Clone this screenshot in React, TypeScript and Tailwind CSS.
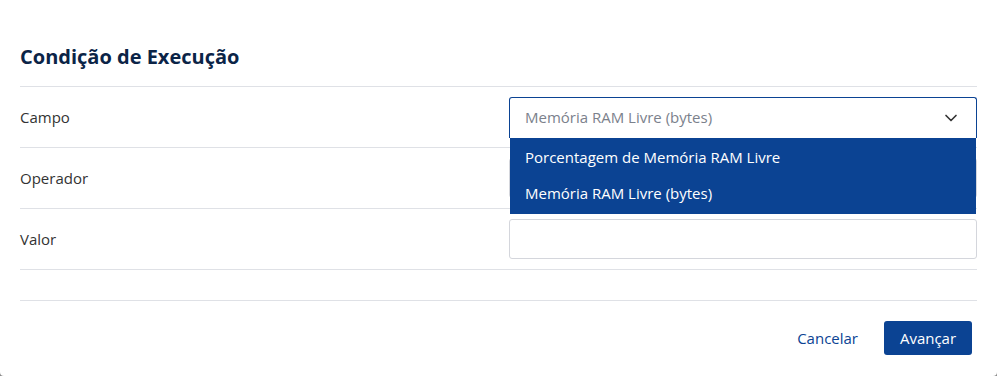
import { ChevronDown } from "lucide-react";

const rowBase = "flex items-center h-[61px] border-b border-[#dfe1e6]";

export default function App() {
  return (
    <div className="h-[376px] w-[997px] bg-[#8a8a8a] font-['Open_Sans',sans-serif]">
      <div className="h-full bg-white rounded-b-[4px] px-5 flex flex-col">
        <h2 className="pt-[41px] pb-[14px] text-[20px] leading-[31px] font-bold text-[#0b2447] border-b border-[#dfe1e6]">
          Condição de Execução
        </h2>

        <div className={rowBase}>
          <span className="w-[489px] text-[15px] text-[#333]">Campo</span>
          <div className="relative flex-1">
            <div className="flex items-center justify-between h-[41px] px-[15px] border border-[#0b4393] border-b-0 rounded-t-[3px] bg-white">
              <span className="text-[15px] text-[#7b818c]">Memória RAM Livre (bytes)</span>
              <ChevronDown className="w-5 h-5 text-[#333]" strokeWidth={2} />
            </div>
            <ul className="absolute left-[1px] right-[1px] top-[41px] z-10 bg-[#0b4393] text-white text-[15px] py-[2px]">
              <li className="h-[36px] flex items-center px-[15px]">Porcentagem de Memória RAM Livre</li>
              <li className="h-[36px] flex items-center px-[15px]">Memória RAM Livre (bytes)</li>
            </ul>
          </div>
        </div>

        <div className={rowBase}>
          <span className="w-[489px] text-[15px] text-[#333]">Operador</span>
          <div className="flex-1 h-[40px] border border-[#d4d6dc] rounded-[3px]" />
        </div>

        <div className={rowBase}>
          <span className="w-[489px] text-[15px] text-[#333]">Valor</span>
          <div className="flex-1 h-[40px] border border-[#d4d6dc] rounded-[3px]" />
        </div>

        <div className="h-[31px] border-b border-[#dfe1e6]" />

        <div className="flex items-center justify-end gap-[26px] pt-[20px] pr-[5px]">
          <button className="text-[15px] text-[#0b4393]">Cancelar</button>
          <button className="h-[34px] w-[88px] rounded-[3px] bg-[#0b4393] text-white text-[15px] font-medium">
            Avançar
          </button>
        </div>
      </div>
    </div>
  );
}
